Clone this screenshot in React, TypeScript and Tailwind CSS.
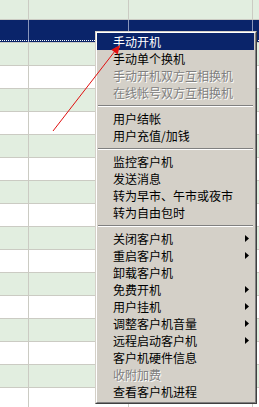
import React from "react";

type Item = { label: string; sub?: boolean; disabled?: boolean; active?: boolean } | "sep";

const menu: Item[] = [
  { label: "手动开机", active: true },
  { label: "手动单个换机" },
  { label: "手动开机双方互相换机", disabled: true },
  { label: "在线帐号双方互相换机", disabled: true },
  "sep",
  { label: "用户结帐" },
  { label: "用户充值/加钱" },
  "sep",
  { label: "监控客户机" },
  { label: "发送消息" },
  { label: "转为早市、午市或夜市" },
  { label: "转为自由包时" },
  "sep",
  { label: "关闭客户机", sub: true },
  { label: "重启客户机", sub: true },
  { label: "卸载客户机" },
  { label: "免费开机", sub: true },
  { label: "用户挂机", sub: true },
  { label: "调整客户机音量", sub: true },
  { label: "远程启动客户机", sub: true },
  { label: "客户机硬件信息" },
  { label: "收附加费", disabled: true },
  { label: "查看客户机进程" },
];

function GridRow({ tone, h = "h-[23px]" }: { tone: "green" | "white" | "sel"; h?: string }) {
  const bg = tone === "green" ? "bg-[#e2eee0]" : tone === "white" ? "bg-white" : "bg-[#0a246a]";
  const line = tone === "sel" ? "border-[#8a96bc]" : "border-[#cbcbc3]";
  return (
    <div className={`flex ${h} ${bg} border-b border-[#cbcbc3] relative`}>
      <div className={`w-[29px] border-r ${line}`} />
      <div className={`w-[100px] border-r ${line}`} />
      <div className={`w-[124px] border-r ${line}`} />
      <div className="flex-1" />
      {tone === "sel" && (
        <div className="absolute left-0 right-0 bottom-[1px] border-b border-dotted border-white" />
      )}
    </div>
  );
}

export default function App() {
  const rows: ("green" | "white")[] = [];
  for (let i = 0; i < 16; i++) rows.push(i % 2 === 0 ? "green" : "white");

  return (
    <div
      className="relative w-[259px] h-[407px] overflow-hidden bg-white"
      style={{ fontFamily: '"Noto Sans CJK SC", "Noto Sans", sans-serif' }}
    >
      {/* grid background */}
      <div className="flex flex-col">
        <GridRow tone="green" h="h-[20px]" />
        <GridRow tone="sel" />
        {rows.map((t, i) => (
          <GridRow key={i} tone={t} />
        ))}
      </div>

      {/* context menu */}
      <div className="absolute left-[95px] top-[31px] w-[162px] border border-t-[#d4d0c8] border-l-[#d4d0c8] border-r-[#404040] border-b-[#404040]">
        <div className="border border-t-white border-l-white border-r-[#808080] border-b-[#808080] bg-[#d4d0c8] pr-[1px] pb-[2px]">
          {menu.map((it, i) =>
            it === "sep" ? (
              <div key={i} className="h-[9px] pt-[4px] px-[1px]">
                <div className="border-t border-[#808080] border-b border-b-white" />
              </div>
            ) : (
              <div
                key={i}
                className={`flex items-center h-[17px] pl-[16px] pr-[5px] text-[12px] leading-none ${
                  it.active ? "bg-[#0a246a] text-white" : it.disabled ? "text-[#808080]" : "text-black"
                }`}
                style={it.disabled ? { textShadow: "1px 1px 0 #ffffff" } : undefined}
              >
                <span className="whitespace-nowrap">{it.label}</span>
                {it.sub && (
                  <svg className="ml-auto" width="4" height="7" viewBox="0 0 4 7">
                    <polygon points="0,0 4,3.5 0,7" fill="#000" />
                  </svg>
                )}
              </div>
            )
          )}
        </div>
      </div>

      {/* red annotation arrow */}
      <svg className="absolute left-0 top-0 pointer-events-none" width="259" height="407">
        <line x1="53" y1="131" x2="115" y2="51" stroke="#e01010" strokeWidth="1" />
        <polygon points="120,45 117.7,54.5 111.3,49.7" fill="#e01010" />
      </svg>
    </div>
  );
}
